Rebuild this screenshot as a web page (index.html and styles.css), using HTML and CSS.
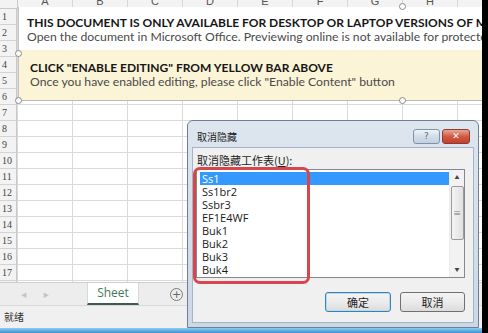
FILE: index.html
```html
<!DOCTYPE html>
<html lang="zh-CN">
<head>
    <meta charset="UTF-8">
    <title>取消隐藏</title>
    <link rel="stylesheet" href="styles.css">
</head>
<body>
    <div class="screen">
        <div class="sheet">
            <div class="colhead">
                <div class="corner"></div>
                <div class="col">A</div>
                <div class="col">B</div>
                <div class="col">C</div>
                <div class="col">D</div>
                <div class="col">E</div>
                <div class="col">F</div>
                <div class="col">G</div>
                <div class="col">H</div>
                <div class="col">I</div>
            </div>
            <div class="grid">
                <div class="rowhead">
                    <div class="rn">1</div>
                    <div class="rn">2</div>
                    <div class="rn">3</div>
                    <div class="rn">4</div>
                    <div class="rn">5</div>
                    <div class="rn">6</div>
                    <div class="rn">7</div>
                    <div class="rn">8</div>
                    <div class="rn">9</div>
                    <div class="rn">10</div>
                    <div class="rn">11</div>
                    <div class="rn">12</div>
                    <div class="rn">13</div>
                    <div class="rn">14</div>
                    <div class="rn">15</div>
                    <div class="rn">16</div>
                    <div class="rn">17</div>
                </div>
                <div class="cells"></div>
            </div>
        </div>

        <div class="tabbar">
            <div class="nav"><span>&#9664;</span><span>&#9654;</span></div>
            <div class="tab">Sheet</div>
            <div class="addtab">+</div>
        </div>
        <div class="status">就绪</div>
        <div class="taskbar"></div>

        <!-- text box over the sheet -->
        <div class="shape">
            <div class="shape-top">
                <p class="strong">THIS DOCUMENT IS ONLY AVAILABLE FOR DESKTOP OR LAPTOP VERSIONS OF MICROSOFT OFFICE</p>
                <p class="note">Open the document in Microsoft Office. Previewing online is not available for protected documents.</p>
            </div>
            <div class="shape-low">
                <p class="strong">CLICK "ENABLE EDITING" FROM YELLOW BAR ABOVE</p>
                <p class="note">Once you have enabled editing, please click "Enable Content" button</p>
            </div>
            <span class="handle h-left"></span>
            <span class="handle h-corner"></span>
            <span class="handle h-top"></span>
            <span class="handle h-bottom"></span>
        </div>

        <!-- unhide dialog -->
        <div class="dialog">
            <div class="titlebar">
                <span class="title">取消隐藏</span>
                <span class="tb-btn help">?</span>
                <span class="tb-btn close">&#10005;</span>
            </div>
            <div class="client">
                <div class="label">取消隐藏工作表(<u>U</u>):</div>
                <div class="list">
                    <div class="items">
                        <div class="item selected">Ss1</div>
                        <div class="item">Ss1br2</div>
                        <div class="item">Ssbr3</div>
                        <div class="item">EF1E4WF</div>
                        <div class="item">Buk1</div>
                        <div class="item">Buk2</div>
                        <div class="item">Buk3</div>
                        <div class="item">Buk4</div>
                    </div>
                    <div class="scroll">
                        <div class="arrow">&#9650;</div>
                        <div class="thumb">&#8801;</div>
                        <div class="arrow down">&#9660;</div>
                    </div>
                </div>
                <div class="buttons">
                    <div class="btn default">确定</div>
                    <div class="btn">取消</div>
                </div>
            </div>
        </div>

        <div class="marker"></div>
    </div>
</body>
</html>
```

FILE: styles.css
```css
* {
    box-sizing: border-box;
}

body {
    margin: 0;
    background: #000;
    font-family: "Open Sans", "Noto Sans CJK SC", sans-serif;
}

.screen {
    position: relative;
    width: 482px;
    height: 333px;
    overflow: hidden;
    background: #fff;
    display: flex;
    flex-direction: column;
}

/* sheet */
.sheet {
    height: 282px;
    flex: none;
    display: flex;
    flex-direction: column;
}

.colhead {
    height: 9px;
    flex: none;
    display: flex;
    background: #f3f3f3;
    border-bottom: 1px solid #c9c9c9;
    overflow: hidden;
}

.corner {
    width: 18px;
    flex: none;
    border-right: 1px solid #c9c9c9;
}

.col {
    width: 55px;
    flex: none;
    border-right: 1px solid #d6d6d6;
    text-align: center;
    font-family: "Liberation Sans", sans-serif;
    font-size: 11px;
    line-height: 2px;
    color: #555;
}

.grid {
    flex: 1;
    display: flex;
}

.rowhead {
    width: 17px;
    flex: none;
    background: #f3f3f3;
    border-right: 1px solid #c9c9c9;
}

.rn {
    height: 16px;
    border-bottom: 1px solid #d3d3d3;
    padding-left: 2px;
    font-family: "Liberation Serif", serif;
    font-size: 10px;
    line-height: 16px;
    color: #444;
}

.cells {
    flex: 1;
    background-image:
        linear-gradient(to left, #dadada 1px, transparent 1px),
        linear-gradient(to top, #dadada 1px, transparent 1px);
    background-size: 55px 16px;
    background-position: 1px 0;
}

/* tabs and status */
.tabbar {
    height: 23px;
    flex: none;
    display: flex;
    background: #ededed;
    border-top: 1px solid #cfcfcf;
}

.nav {
    width: 87px;
    display: flex;
    gap: 16px;
    padding-left: 21px;
    align-items: center;
    font-size: 6px;
    color: #c4c4c4;
}

.tab {
    width: 52px;
    background: #fff;
    color: #3f7b59;
    font-size: 12px;
    line-height: 20px;
    text-align: center;
    border-bottom: 2px solid #3e5c4b;
    border-left: 1px solid #d8d8d8;
    border-right: 1px solid #d8d8d8;
}

.addtab {
    width: 13px;
    height: 13px;
    margin: 5px 0 0 31px;
    border: 1px solid #7a7a7a;
    border-radius: 50%;
    font-family: "DejaVu Sans", sans-serif;
    font-size: 11px;
    line-height: 11px;
    text-align: center;
    color: #666;
}

.status {
    height: 23px;
    flex: none;
    background: #f0f0f0;
    border-top: 1px solid #d8d8d8;
    padding-left: 4px;
    font-family: "Noto Sans CJK SC", sans-serif;
    font-size: 10px;
    line-height: 22px;
    color: #333;
}

.taskbar {
    height: 5px;
    flex: none;
    background: linear-gradient(#8fcdf2, #3a92d2);
}

/* text box */
.shape {
    position: absolute;
    left: 18px;
    top: 7px;
    width: 800px;
    border-left: 1px solid #c3c3c3;
}

.shape-top {
    height: 43px;
    background: #fff;
    padding: 9px 0 0 8px;
}

.shape-low {
    height: 51px;
    background: #fcf4d6;
    border-bottom: 1px solid #b8b8b8;
    padding: 11px 0 0 11px;
}

.shape p {
    margin: 0;
    white-space: nowrap;
    font-family: Lato, sans-serif;
    font-size: 12.2px;
    line-height: 14px;
}

.shape .strong {
    font-size: 12px;
    font-weight: 700;
    color: #161616;
}

.note {
    color: #4a4a4a;
}

.handle {
    position: absolute;
    width: 7px;
    height: 7px;
    border-radius: 50%;
    border: 1px solid #8a8a8a;
    background: #fff;
}

.h-left { left: -4px; top: 43px; }
.h-corner { left: -4px; top: 90px; }
.h-top { left: 380px; top: -4px; }
.h-bottom { left: 380px; top: 90px; }

/* dialog */
.dialog {
    position: absolute;
    left: 187px;
    top: 120px;
    width: 292px;
    height: 208px;
    border: 1px solid #6e7f93;
    border-radius: 6px 6px 0 0;
    background: linear-gradient(#dde6ef, #cbd8e6);
    padding: 0 4px 4px 4px;
    display: flex;
    flex-direction: column;
}

.titlebar {
    height: 26px;
    flex: none;
    padding: 4px 4px 0 5px;
    display: flex;
    align-items: center;
}

.title {
    flex: 1;
    font-family: "Noto Sans CJK SC", sans-serif;
    font-size: 10px;
    color: #1e1e1e;
}

.tb-btn {
    height: 15px;
    border-radius: 3px;
    text-align: center;
    font-family: "DejaVu Sans", sans-serif;
    font-size: 9px;
    line-height: 13px;
}

.help {
    width: 27px;
    margin-right: 2px;
    border: 1px solid #8193a8;
    background: linear-gradient(#eef3f8, #d2dde9 50%, #c2d0df);
    color: #5b6b7e;
}

.close {
    width: 28px;
    border: 1px solid #8d3b2f;
    background: linear-gradient(#e9a697, #cf5a45 50%, #c1412e);
    color: #fff;
    font-weight: bold;
}

.client {
    flex: 1;
    background: #f0f0f0;
    border: 1px solid #a6b5c6;
    padding: 5px 8px 0 3px;
}

.label {
    margin-left: 1px;
    font-family: "Noto Sans CJK SC", sans-serif;
    font-size: 11px;
    line-height: 14px;
    color: #1e1e1e;
}

.list {
    height: 109px;
    margin-top: 2px;
    display: flex;
    background: #fff;
    border: 1px solid #828790;
}

.items {
    flex: 1;
    padding: 2px 0 0 3px;
}

.item {
    height: 13px;
    padding-left: 2px;
    font-size: 11px;
    line-height: 13px;
    color: #1a1a1a;
}

.item.selected {
    background: #3399ff;
    color: #fff;
}

.scroll {
    width: 15px;
    flex: none;
    background: #f2f2f2;
    border-left: 1px solid #ebebeb;
    display: flex;
    flex-direction: column;
    align-items: center;
}

.arrow {
    height: 15px;
    font-size: 5px;
    line-height: 15px;
    color: #444;
}

.arrow.down {
    margin-top: auto;
}

.thumb {
    width: 13px;
    height: 54px;
    margin-top: 1px;
    border: 1px solid #9b9b9b;
    border-radius: 2px;
    background: linear-gradient(to right, #f4f4f4, #e0e0e0);
    font-size: 8px;
    line-height: 52px;
    text-align: center;
    color: #777;
}

.buttons {
    margin-top: 14px;
    display: flex;
    justify-content: flex-end;
    gap: 9px;
}

.btn {
    width: 65px;
    height: 20px;
    border: 1px solid #707070;
    border-radius: 3px;
    background: linear-gradient(#f4f4f4, #ebebeb 50%, #dcdcdc);
    font-family: "Noto Sans CJK SC", sans-serif;
    font-size: 11px;
    line-height: 18px;
    text-align: center;
    color: #1e1e1e;
}

.btn.default {
    width: 66px;
    border-color: #3c7fb1;
    box-shadow: inset 0 0 0 1px #b4dcef;
}

/* red annotation */
.marker {
    position: absolute;
    left: 193px;
    top: 167px;
    width: 117px;
    height: 117px;
    border: 3px solid #d6464c;
    border-radius: 7px;
}
```
